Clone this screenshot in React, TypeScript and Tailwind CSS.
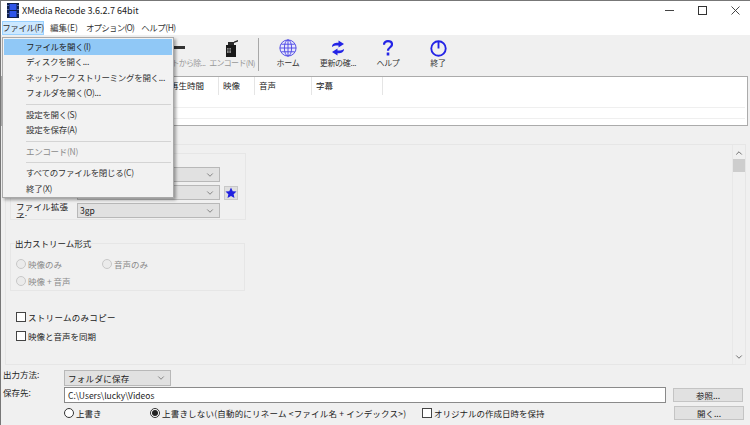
import { ChevronDown, ChevronUp } from "lucide-react";

const font = { fontFamily: '"Noto Sans CJK JP", "Noto Sans", sans-serif' };

const menuItems = [
  { label: "ファイルを開く(I)", active: true },
  { label: "ディスクを開く..." },
  { label: "ネットワーク ストリーミングを開く..." },
  { label: "フォルダを開く(O)..." },
  { sep: true },
  { label: "設定を開く(S)" },
  { label: "設定を保存(A)" },
  { sep: true },
  { label: "エンコード(N)", disabled: true },
  { sep: true },
  { label: "すべてのファイルを閉じる(C)" },
  { label: "終了(X)" },
];

const columns = [
  { label: "再生時間", w: "w-[217px] pl-[168px]" },
  { label: "映像", w: "w-[36px] pl-[4px]" },
  { label: "音声", w: "w-[57px] pl-[4px]" },
  { label: "字幕", w: "w-[71px] pl-[4px]" },
];

const Logo = () => (
  <svg width="12" height="15" viewBox="0 0 12 15">
    <rect x="0" y="0" width="12" height="15" fill="#10204a" />
    <rect x="2.5" y="1" width="7" height="6" fill="#2f55e8" />
    <rect x="2.5" y="8" width="7" height="6" fill="#2f55e8" />
    <rect x="0.5" y="2" width="1" height="1" fill="#9fb4ff" />
    <rect x="0.5" y="6" width="1" height="1" fill="#9fb4ff" />
    <rect x="0.5" y="10" width="1" height="1" fill="#9fb4ff" />
    <rect x="10.5" y="2" width="1" height="1" fill="#9fb4ff" />
    <rect x="10.5" y="6" width="1" height="1" fill="#9fb4ff" />
    <rect x="10.5" y="10" width="1" height="1" fill="#9fb4ff" />
  </svg>
);

const MinusIcon = () => (
  <svg width="20" height="20" viewBox="0 0 20 20">
    <rect x="3" y="8" width="11" height="3" fill="#333" />
  </svg>
);

const EncodeIcon = () => (
  <svg width="20" height="20" viewBox="0 0 20 20">
    <path d="M4 7h10v12H4z" fill="#1a1a1a" />
    <path d="M6 4h6v3H6zM12 3.500l4-1.500v1.500l-4 1.500z" fill="#2a2a2a" />
    <rect x="5" y="10" width="4" height="5" fill="#8a8a8a" />
    <path d="M5 12h4M7 10v5" stroke="#1a1a1a" strokeWidth="0.7" />
  </svg>
);

const GlobeIcon = () => (
  <svg width="18" height="18" viewBox="0 0 20 20" fill="none" stroke="#4a44e4" strokeWidth="1">
    <circle cx="10" cy="10" r="9" fill="#e8e8fb" />
    <ellipse cx="10" cy="10" rx="4" ry="9" />
    <path d="M10 1v18M1 10h18M2.500 5.800h15M2.500 14.200h15" />
  </svg>
);

const RefreshIcon = () => (
  <svg width="14" height="16" viewBox="0 0 14 16" fill="#2424e6">
    <path d="M1 7c0-3 2.500-4.300 6.500-4.200V.5L13 4 7.500 7.500V5.500C5 5.300 3 5.700 1 7z" />
    <path d="M13 9c0 3-2.500 4.300-6.500 4.200v2.300L1 12l5.500-3.500v2c2.500.2 4.500-.2 6.500-1.500z" />
  </svg>
);

const HelpIcon = () => (
  <svg width="10" height="16" viewBox="0 0 10 16" fill="none">
    <path d="M1 4.800C1 2.500 2.800 1.200 5 1.200S9 2.500 9 4.500C9 7.300 5 7.300 5 10.800" stroke="#2424e6" strokeWidth="2.200" />
    <rect x="3.700" y="12.500" width="2.600" height="3" fill="#2424e6" />
  </svg>
);

const PowerIcon = () => (
  <svg width="17" height="17" viewBox="0 0 20 20" fill="none" stroke="#2424e6" strokeWidth="2.200">
    <circle cx="10" cy="10" r="8.500" />
    <path d="M10 2v8" />
  </svg>
);

const ToolButton = ({ icon, label, disabled }: { icon: React.ReactNode; label: string; disabled?: boolean }) => (
  <div className="w-[50px] h-full flex flex-col items-center pt-[3px] shrink-0">
    <div className="h-[20px] flex items-center justify-center">{icon}</div>
    <div className={`-mt-[1px] text-[8px] leading-[12px] whitespace-nowrap ${disabled ? "text-[#999] tracking-[-0.7px]" : "text-[#333] tracking-[-0.3px]"}`}>
      {label}
    </div>
  </div>
);

const Select = ({ value, className }: { value: string; className: string }) => (
  <div className={`bg-[#e1e1e1] border border-[#b8b8b8] flex items-center justify-between pl-[2px] pr-[4px] ${className}`}>
    <span className="text-[8.5px] leading-none text-[#222] whitespace-nowrap">{value}</span>
    <ChevronDown size={10} strokeWidth={1.4} color="#444" />
  </div>
);

const Radio = ({ label, checked, disabled, className }: { label: string; checked?: boolean; disabled?: boolean; className?: string }) => (
  <div className={`flex items-center gap-[2px] ${className ?? ""}`}>
    <div className={`w-[10px] h-[10px] rounded-full border flex items-center justify-center shrink-0 ${disabled ? "border-[#c8c8c8] bg-[#ebebeb]" : "border-[#333] bg-white"}`}>
      {checked && <div className="w-[6px] h-[6px] rounded-full bg-[#222]" />}
    </div>
    <span className={`text-[8.5px] leading-none whitespace-nowrap ${disabled ? "text-[#8a8a8a]" : "text-[#222]"}`}>{label}</span>
  </div>
);

const Check = ({ label, className }: { label: string; className?: string }) => (
  <div className={`flex items-center gap-[2px] ${className ?? ""}`}>
    <div className="w-[10px] h-[10px] border border-[#444] bg-white shrink-0" />
    <span className="text-[8.5px] leading-none whitespace-nowrap text-[#222]">{label}</span>
  </div>
);

export default function App() {
  return (
    <div className="relative w-[750px] h-[425px] overflow-hidden bg-[#f0f0f0] flex flex-col border-t border-l border-[#777]" style={font}>
      {/* Title bar */}
      <div className="h-[19px] shrink-0 bg-white flex items-center pl-[6px]">
        <Logo />
        <span className="ml-[3px] text-[9px] text-[#222] whitespace-nowrap">XMedia Recode 3.6.2.7 64bit</span>
        <div className="ml-auto mr-[10px] flex items-center gap-[24px]">
          <div className="w-[9px] h-[1px] bg-[#444]" />
          <div className="w-[9px] h-[9px] border border-[#333]" />
          <svg width="9" height="9" viewBox="0 0 9 9" stroke="#333" strokeWidth="0.9">
            <path d="M0.500 0.500l8 8M8.500 0.500l-8 8" />
          </svg>
        </div>
      </div>

      {/* Menu bar */}
      <div className="h-[15px] shrink-0 bg-white flex items-center pl-[1px] text-[8.5px] text-[#333]">
        <div className="w-[42px] h-[14px] bg-[#cce8ff] border border-[#99d1ff] flex items-center justify-center whitespace-nowrap tracking-[-0.4px]">ファイル(F)</div>
        <div className="ml-[6px] w-[28px] flex items-center justify-center whitespace-nowrap">編集(E)</div>
        <div className="ml-[10px] w-[44px] flex items-center justify-center whitespace-nowrap tracking-[-0.8px]">オプション(O)</div>
        <div className="ml-[10px] w-[33px] flex items-center justify-center whitespace-nowrap tracking-[-0.5px]">ヘルプ(H)</div>
      </div>

      {/* Toolbar */}
      <div className="h-[41px] shrink-0 flex pl-[155px]">
        <ToolButton icon={<MinusIcon />} label="リストから除..." disabled />
        <div className="w-[1px]" />
        <ToolButton icon={<EncodeIcon />} label="エンコード(N)" disabled />
        <div className="w-[1px] h-[33px] mt-[3px] bg-[#a8a8a8] ml-[1px] mr-[4px]" />
        <ToolButton icon={<GlobeIcon />} label="ホーム" />
        <ToolButton icon={<RefreshIcon />} label="更新の確..." />
        <ToolButton icon={<HelpIcon />} label="ヘルプ" />
        <ToolButton icon={<PowerIcon />} label="終了" />
      </div>

      {/* File list */}
      <div className="h-[50px] w-[747px] shrink-0 bg-white border border-[#ababab]">
        <div className="flex h-[18px]">
          {columns.map((c, i) => (
            <div key={i} className={`${c.w} border-r border-[#e5e5e5] pt-[2px] text-[8.5px] leading-[12px] text-[#222] whitespace-nowrap`}>
              {c.label}
            </div>
          ))}
        </div>
        <div className="mt-[12px] h-[12px] border-y border-[#efefef] mr-[2px]" />
      </div>

      {/* Settings panel */}
      <div className="mt-[18px] ml-[4px] w-[741px] h-[221px] shrink-0 border border-[#e6e6e6] flex">
        <div className="flex-1 pl-[4px]">
          <div className="mt-[8px] w-[236px] h-[67px] border border-[#e6e6e6] pt-[13px] flex flex-col gap-[3px]">
            <div className="pl-[66px]">
              <Select value="" className="w-[143px] h-[15px]" />
            </div>
            <div className="pl-[66px] flex items-center gap-[4px]">
              <Select value="" className="w-[143px] h-[15px]" />
              <div className="w-[14px] h-[14px] bg-[#dfdfdf] border border-[#c8c8c8] flex items-center justify-center">
                <svg width="12" height="12" viewBox="0 0 20 20" fill="#2020e0">
                  <path d="M10 1l2.800 6 6.400.7-4.800 4.300 1.400 6.500L10 15.200 4.200 18.500l1.400-6.500L.8 7.700 7.200 7z" />
                </svg>
              </div>
            </div>
            <div className="flex pl-[5px] items-start">
              <div className="w-[61px] h-[17px] -mt-[2px] pr-[4px] overflow-hidden text-[8.5px] leading-[10px] tracking-[0.2px] text-[#222]">ファイル拡張子:</div>
              <Select value="3gp" className="w-[143px] h-[15px]" />
            </div>
          </div>

          <div className="relative mt-[23px] w-[235px] h-[48px] border border-[#e6e6e6] pl-[5px] pt-[15px]">
            <div className="absolute left-[4px] -top-[7px] bg-[#f0f0f0] text-[8.5px] leading-[12px] text-[#222] whitespace-nowrap">出力ストリーム形式</div>
            <div className="flex">
              <Radio label="映像のみ" disabled className="w-[86px]" />
              <Radio label="音声のみ" disabled />
            </div>
            <Radio label="映像 + 音声" disabled className="mt-[7px]" />
          </div>

          <Check label="ストリームのみコピー" className="mt-[21px] ml-[6px] tracking-[0.3px]" />
          <Check label="映像と音声を同期" className="mt-[9px] ml-[6px]" />
        </div>

        {/* Scrollbar */}
        <div className="w-[13px] border-l border-[#e8e8e8] flex flex-col items-center">
          <ChevronUp size={10} strokeWidth={1.8} color="#444" className="mt-[3px]" />
          <div className="w-full h-[13px] mt-[1px] bg-[#cdcdcd]" />
          <ChevronDown size={10} strokeWidth={1.8} color="#444" className="mt-auto mb-[2px]" />
        </div>
      </div>

      {/* Output settings */}
      <div className="flex items-center mt-[5px] h-[16px] shrink-0 text-[8.5px] text-[#222]">
        <div className="w-[63px] pl-[2px] pb-[7px] leading-none whitespace-nowrap">出力方法:</div>
        <Select value="フォルダに保存" className="w-[107px] h-[16px] pl-[3px] tracking-[0.3px]" />
      </div>
      <div className="flex items-center mt-[1px] h-[16px] shrink-0 text-[8.5px] text-[#222]">
        <div className="w-[63px] pl-[2px] pb-[6px] leading-none whitespace-nowrap">保存先:</div>
        <div className="w-[602px] h-[16px] bg-white border border-[#8a8a8a] flex items-center pl-[3px] leading-none whitespace-nowrap">C:\Users\lucky\Videos</div>
        <div className="ml-[7px] w-[70px] h-[14px] bg-[#e1e1e1] border border-[#c4c4c4] flex items-center justify-center leading-none">参照...</div>
      </div>
      <div className="flex items-center mt-[2px] h-[16px] shrink-0 pl-[63px]">
        <Radio label="上書き" className="w-[86px]" />
        <Radio label="上書きしない(自動的にリネーム <ファイル名 + インデックス>)" checked className="w-[272px] tracking-[0.2px]" />
        <Check label="オリジナルの作成日時を保持" />
        <div className="ml-auto mr-[6px] w-[70px] h-[14px] bg-[#e1e1e1] border border-[#c4c4c4] flex items-center justify-center text-[8.5px] leading-none text-[#222]">開く...</div>
      </div>

      {/* File menu popup */}
      <div className="absolute left-[1px] top-[36px] w-[172px] h-[161px] bg-[#f2f2f2] border border-[#a9a9a9] shadow-[2px_2px_3px_rgba(0,0,0,0.35)] p-[1px] flex flex-col">
        {menuItems.map((item, i) =>
          item.sep ? (
            <div key={i} className="h-[1px] my-[2.500px] ml-[22px] mr-[1px] shrink-0 bg-[#d4d4d4]" />
          ) : (
            <div
              key={i}
              className={`h-[15.500px] shrink-0 flex items-center pl-[22px] pb-[2px] text-[8.5px] leading-none whitespace-nowrap tracking-[-0.3px] ${item.active ? "bg-[#90c8f6] text-[#222]" : item.disabled ? "text-[#8c8c8c]" : "text-[#333]"}`}
            >
              {item.label}
            </div>
          )
        )}
      </div>
    </div>
  );
}
